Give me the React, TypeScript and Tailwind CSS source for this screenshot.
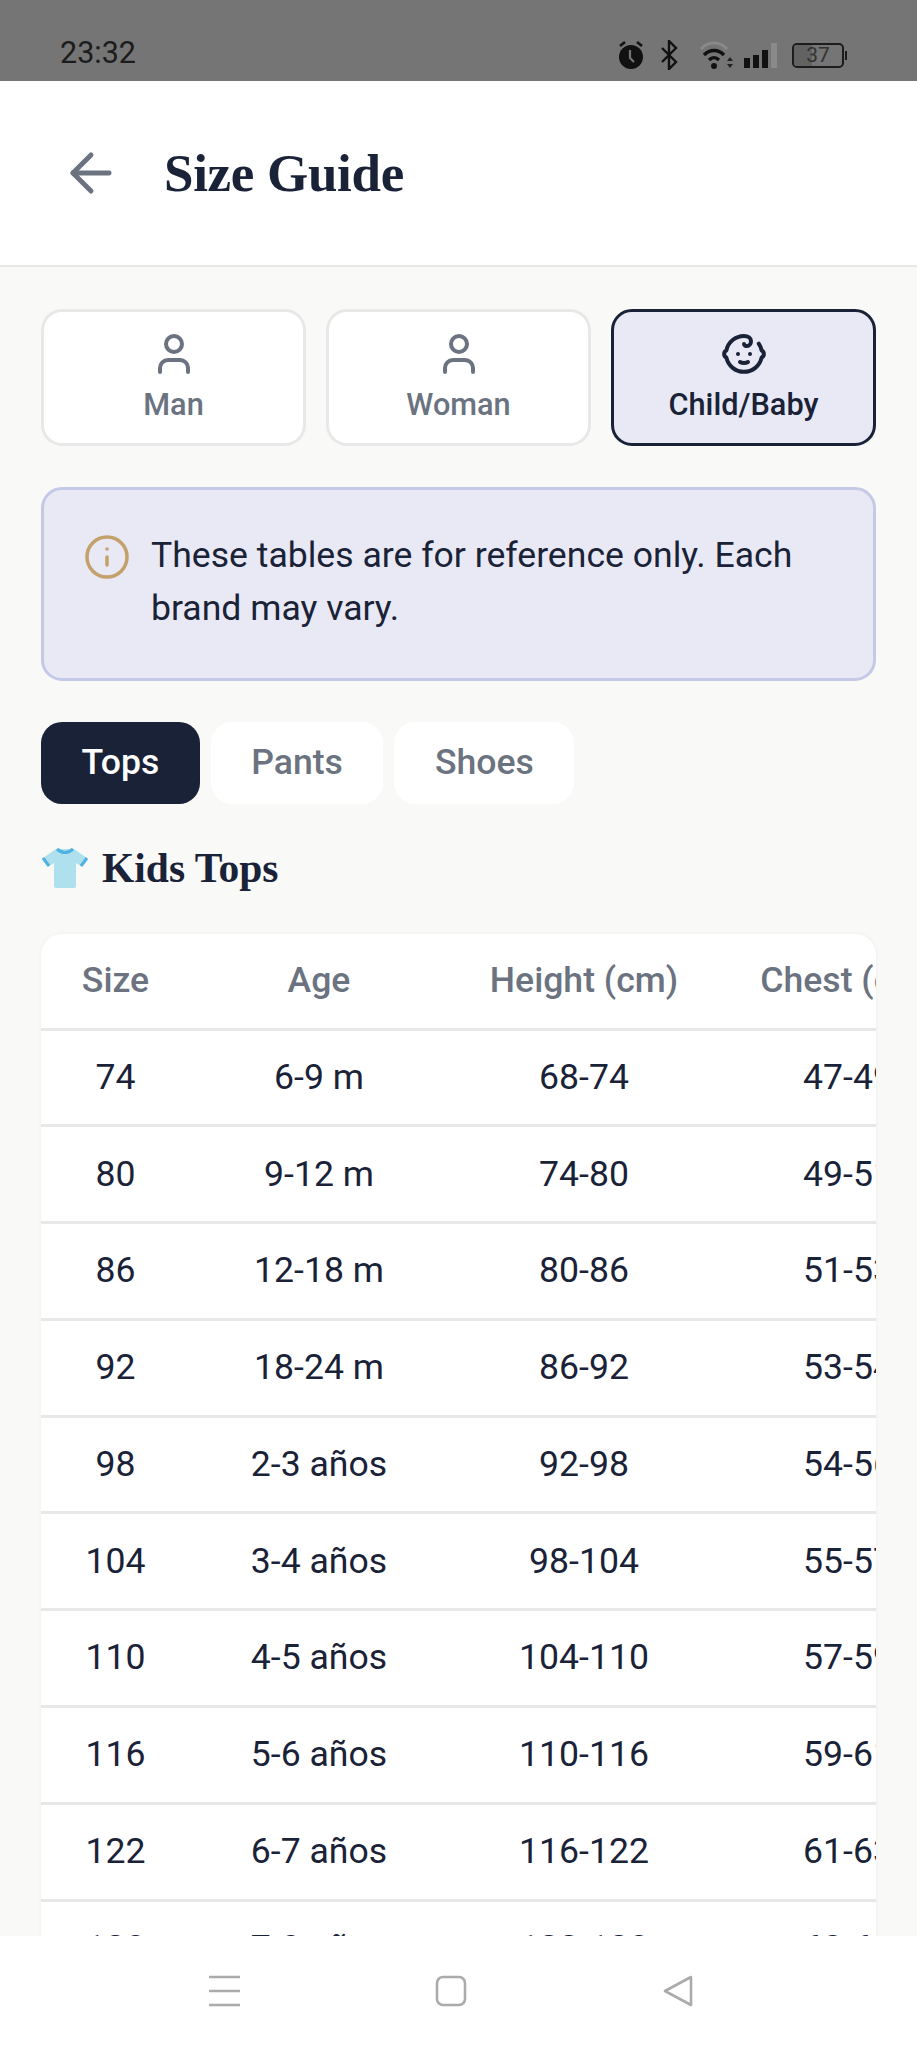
import { ArrowLeft, Baby, Info, User } from "lucide-react";

const ROWS = [
  ["74", "6-9 m", "68-74", "47-49"],
  ["80", "9-12 m", "74-80", "49-51"],
  ["86", "12-18 m", "80-86", "51-53"],
  ["92", "18-24 m", "86-92", "53-54"],
  ["98", "2-3 años", "92-98", "54-56"],
  ["104", "3-4 años", "98-104", "55-57"],
  ["110", "4-5 años", "104-110", "57-59"],
  ["116", "5-6 años", "110-116", "59-61"],
  ["122", "6-7 años", "116-122", "61-63"],
  ["128", "7-8 años", "122-128", "63-65"],
];

function StatusBar() {
  return (
    <div className="flex h-[81px] shrink-0 items-end justify-between bg-[#757575] pb-[11px] pl-[60px] pr-[70px]">
      <span className="text-[30.5px] leading-[34px] text-[#1c1c1c]">23:32</span>
      <div className="flex items-center">
        <svg width="28" height="30" viewBox="0 0 26 30" className="mr-[16px]">
          <circle cx="13" cy="17" r="12" fill="#111" />
          <path d="M12 10v8l4 4" stroke="#757575" strokeWidth="2.2" fill="none" />
          <path d="M2 6l5-4M24 6l-5-4" stroke="#111" strokeWidth="2.6" />
        </svg>
        <svg width="17" height="30" viewBox="0 0 17 30" className="mr-[21px]">
          <path d="M1 8l14 14-7 7V1l7 7L1 22" stroke="#111" strokeWidth="2.4" fill="none" />
        </svg>
        <svg width="35" height="28" viewBox="0 0 35 28" className="mr-[10px]">
          <path d="M2 8c7-8 19-8 26 0" stroke="#8a8a8a" strokeWidth="3" fill="none" />
          <path d="M5 14c6-6 14-6 20 0M10 19c3-3 7-3 10 0" stroke="#111" strokeWidth="3.4" fill="none" />
          <circle cx="15" cy="25" r="3" fill="#111" />
          <path d="M28 20l3-4 3 4zM28 23l3 4 3-4z" fill="#222" />
        </svg>
        <div className="mr-[15px] flex items-end gap-[3px]">
          <span className="h-[10px] w-[6px] bg-[#111]" />
          <span className="h-[13px] w-[6px] bg-[#111]" />
          <span className="h-[18px] w-[6px] bg-[#111]" />
          <span className="h-[25px] w-[6px] bg-[#8a8a8a]" />
        </div>
        <div className="relative flex h-[25px] w-[52px] items-center justify-center overflow-hidden rounded-[5px] border-2 border-[#1c1c1c]">
          <span className="absolute inset-y-0 left-0 w-[37%] bg-[#626262]" />
          <span className="relative text-[21px] leading-none text-[#333]">37</span>
        </div>
        <span className="ml-[1px] h-[9px] w-[2px] bg-[#1c1c1c]" />
      </div>
    </div>
  );
}

function Header() {
  return (
    <div className="flex h-[186px] shrink-0 items-center border-b-2 border-[#e8e8e8] bg-white pl-[60px]">
      <ArrowLeft size={62} strokeWidth={1.9} className="text-[#6b7280]" />
      <h1 className="ml-[42px] font-['Liberation_Serif',serif] text-[53px] font-bold leading-none tracking-[-0.3px] text-[#1a2238]">
        Size Guide
      </h1>
    </div>
  );
}

function PersonButton({ label, active }: { label: string; active?: boolean }) {
  const Icon = active ? Baby : User;
  return (
    <div
      className={`flex h-[137px] flex-1 flex-col items-center rounded-[21px] border-[3px] pt-[18px] ${
        active ? "border-[#1a2238] bg-[#e8e9f5] text-[#1a2238]" : "border-[#e8e8e8] bg-white text-[#6b7280]"
      }`}
    >
      <Icon size={48} strokeWidth={2} />
      <span className="mt-[9px] text-[30.7px] font-medium leading-[36px]">{label}</span>
    </div>
  );
}

function Tab({ label, active }: { label: string; active?: boolean }) {
  return (
    <div
      className={`flex h-[82px] items-center rounded-[21px] px-[40.5px] text-[35.6px] font-medium ${
        active ? "bg-[#1a2238] text-white" : "bg-white text-[#6b7280]"
      }`}
    >
      {label}
    </div>
  );
}

function Shirt() {
  return (
    <svg width="48" height="42" viewBox="0 0 48 42">
      <path d="M15 2h18l13 9-6 8-5-3v23q0 2-2 2H15q-2 0-2-2V16l-5 3-6-8z" fill="#aee0ee" />
      <path d="M16 2q8 7 16 0" stroke="#4fb2e2" strokeWidth="3" fill="none" />
      <path d="M2 11l6 8M46 11l-6 8" stroke="#4fb2e2" strokeWidth="3" />
    </svg>
  );
}

function SizeTable() {
  return (
    <div className="mt-[40px] overflow-hidden rounded-t-[21px] bg-white shadow-[0_0_4px_rgba(0,0,0,0.05)]">
      <table className="w-[935px] table-fixed border-collapse text-center">
        <colgroup>
          <col className="w-[149px]" />
          <col className="w-[258px]" />
          <col className="w-[272px]" />
          <col className="w-[256px]" />
        </colgroup>
        <thead>
          <tr className="h-[95px] border-b-[3px] border-[#e8e8e8] text-[35.6px] font-medium text-[#6b7280]">
            <th className="font-medium">Size</th>
            <th className="font-medium">Age</th>
            <th className="font-medium">Height (cm)</th>
            <th className="font-medium">Chest (cm)</th>
          </tr>
        </thead>
        <tbody>
          {ROWS.map((row) => (
            <tr key={row[0]} className="h-[96.8px] border-b-[3px] border-[#e8e8e8] text-[35.6px] text-[#1a2238]">
              {row.map((cell, i) => (
                <td key={i}>{cell}</td>
              ))}
            </tr>
          ))}
        </tbody>
      </table>
    </div>
  );
}

function NavBar() {
  return (
    <div className="flex h-[112px] shrink-0 items-start bg-white pl-[209px] pt-[39px]">
      <svg width="31" height="32" viewBox="0 0 31 32">
        <path d="M0 2h31M0 16h31M0 30h31" stroke="#ababab" strokeWidth="2.6" />
      </svg>
      <svg width="32" height="32" viewBox="0 0 32 32" className="ml-[195px]">
        <rect x="2" y="2" width="28" height="28" rx="6" fill="none" stroke="#ababab" strokeWidth="2.6" />
      </svg>
      <svg width="32" height="32" viewBox="0 0 32 32" className="ml-[196px]">
        <path d="M28 2v28L2 16z" fill="none" stroke="#ababab" strokeWidth="2.6" strokeLinejoin="round" />
      </svg>
    </div>
  );
}

export default function App() {
  return (
    <div className="flex h-[2048px] w-[917px] flex-col overflow-hidden bg-[#f9f9f7] font-['Roboto',sans-serif]">
      <StatusBar />
      <Header />
      <div className="min-h-0 flex-1 overflow-hidden px-[41px] pt-[42px]">
        {/* gender picker */}
        <div className="flex gap-[20px]">
          <PersonButton label="Man" />
          <PersonButton label="Woman" />
          <PersonButton label="Child/Baby" active />
        </div>

        <div className="mt-[41px] flex h-[194px] gap-[20px] rounded-[21px] border-[3px] border-[#c5c9e8] bg-[#e8e9f5] pl-[39px] pr-[60px] pt-[39px]">
          <Info size={48} strokeWidth={1.75} className="mt-[4px] shrink-0 text-[#c4a06a]" />
          <p className="text-[35.6px] leading-[53px] text-[#1a2238]">
            These tables are for reference only. Each brand may vary.
          </p>
        </div>

        <div className="mt-[41px] flex gap-[11px]">
          <Tab label="Tops" active />
          <Tab label="Pants" />
          <Tab label="Shoes" />
        </div>

        <div className="mt-[38px] flex items-center gap-[13px]">
          <Shirt />
          <h2 className="font-['Liberation_Serif',serif] text-[41.5px] font-bold leading-[52px] text-[#1a2238]">
            Kids Tops
          </h2>
        </div>

        <SizeTable />
      </div>
      <NavBar />
    </div>
  );
}
